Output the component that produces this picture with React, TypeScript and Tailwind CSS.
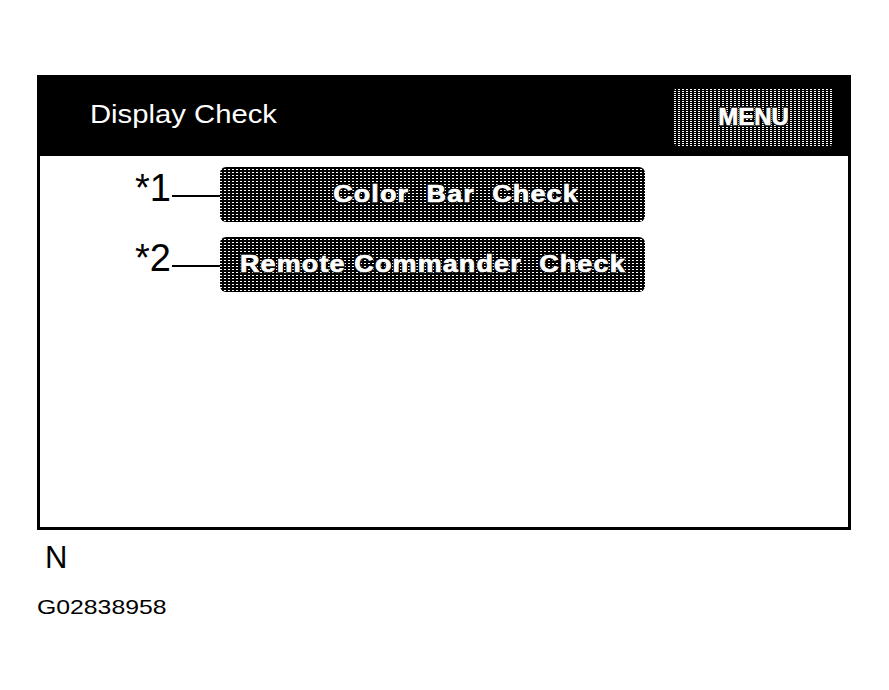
const dither =
  'bg-black bg-[image:linear-gradient(#000_2px,transparent_2px),linear-gradient(90deg,#fff_2px,#000_2px)] bg-[length:4px_3px]';
const ditherLight =
  'bg-black bg-[image:linear-gradient(#000_1px,transparent_1px),linear-gradient(90deg,#fff_2px,#000_2px)] bg-[length:4px_2px]';
const halo =
  '[text-shadow:1px_1px_0_#000,-1px_-1px_0_#000,1px_-1px_0_#000,-1px_1px_0_#000] [-webkit-text-stroke:0.7px_#fff]';

const items = [
  { mark: '*1', label: 'Color\u00a0\u00a0Bar\u00a0\u00a0Check', shift: 'pl-[46px]' },
  { mark: '*2', label: 'Remote\u00a0Commander\u00a0\u00a0Check', shift: 'pl-0' },
];

export default function App() {
  return (
    <div className="w-[889px] h-[690px] bg-white text-black font-['Liberation_Sans',Arial,sans-serif] overflow-hidden">
      <div className="ml-[37px] pt-[75px] w-[814px]">
        {/* title bar */}
        <div className="h-[81px] bg-black flex items-center justify-between pl-[53px] pr-[18px]">
          <span className="inline-block origin-left scale-x-[1.17] text-white text-[25px] leading-none -mt-[2px]">
            Display Check
          </span>
          <div className={`${ditherLight} w-[159px] h-[58px] rounded-[4px] flex items-center justify-center mt-[2px]`}>
            <span className={`inline-block text-white font-bold text-[24px] leading-none ${halo}`}>MENU</span>
          </div>
        </div>

        {/* body */}
        <div className="h-[374px] border-[3px] border-t-0 border-black pt-[11px] pl-[95px] flex flex-col gap-[15px]">
          {items.map((it) => (
            <div key={it.mark} className="flex items-center h-[55px]">
              <span className="w-[37px] text-[38px] leading-none -mt-[14px]">{it.mark}</span>
              <div className="w-[48px] h-[2px] bg-black mt-[2px]" />
              <div className={`${dither} w-[425px] h-[55px] rounded-[6px] flex items-center justify-center ${it.shift}`}>
                <span className={`inline-block scale-x-[1.17] text-white font-bold text-[23px] tracking-[1px] leading-none ${halo}`}>
                  {it.label}
                </span>
              </div>
            </div>
          ))}
        </div>
      </div>

      <div className="ml-[45px] mt-[12px] text-[31px] leading-none">N</div>
      <div className="ml-[37px] mt-[23px] text-[21px] leading-none">
        <span className="inline-block origin-left scale-x-[1.18]">G02838958</span>
      </div>
    </div>
  );
}
